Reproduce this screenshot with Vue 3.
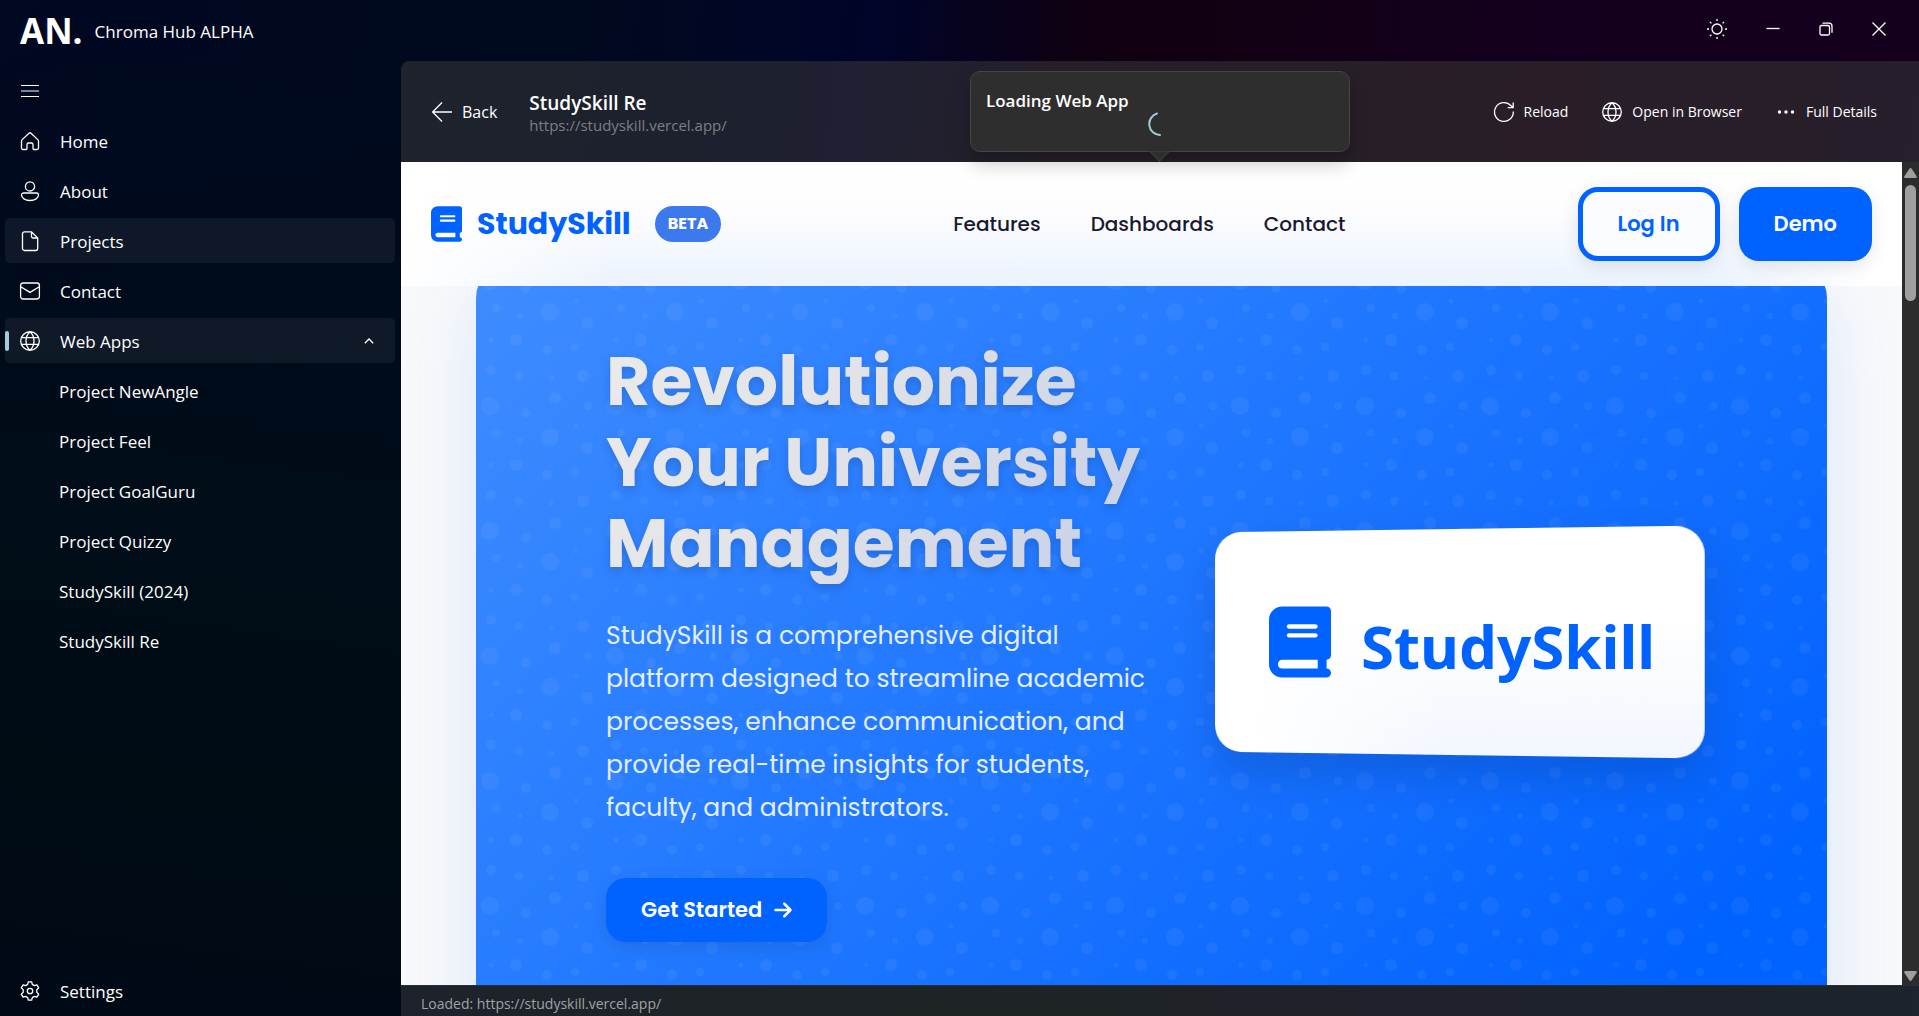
<script setup>
const bookPath =
  'M96 0C43 0 0 43 0 96V416c0 53 43 96 96 96H384h32c17.7 0 32-14.3 32-32s-14.3-32-32-32V384c17.7 0 32-14.3 32-32V32c0-17.7-14.3-32-32-32H384 96zm0 384H352v64H96c-17.7 0-32-14.3-32-32s14.3-32 32-32zm32-240c0-8.8 7.2-16 16-16H336c8.8 0 16 7.2 16 16s-7.2 16-16 16H144c-8.8 0-16-7.2-16-16zm16 48H336c8.8 0 16 7.2 16 16s-7.2 16-16 16H144c-8.8 0-16-7.2-16-16s7.2-16 16-16z'

const globePath =
  'M10 .7a9.300 9.300 0 1 0 0 18.600a9.300 9.300 0 1 0 0-18.600zM10 .7c-2.600 2.300-4 5.500-4 9.300s1.400 7 4 9.300M10 .7c2.600 2.300 4 5.500 4 9.300s-1.400 7-4 9.300M1.500 6.700h17M1.500 13.300h17'

const navItems = [
  { label: 'Home', icon: 'M2.200 8.600 9 2.200a1.500 1.500 0 0 1 2 0l6.800 6.400q.7.700.7 1.600V17a1.500 1.500 0 0 1-1.500 1.500h-3A1 1 0 0 1 13 17.500v-4a1.500 1.500 0 0 0-1.500-1.500h-3A1.500 1.500 0 0 0 7 13.500v4a1 1 0 0 1-1 1H3A1.500 1.500 0 0 1 1.500 17v-6.800q0-.9.7-1.600z' },
  { label: 'About', icon: 'M10 .8a4.600 4.600 0 1 0 0 9.200a4.600 4.600 0 1 0 0-9.200zM3.500 12h13a2 2 0 0 1 2 2c0 3-3.500 5.500-8.500 5.500S1.500 17 1.500 14a2 2 0 0 1 2-2z' },
  { label: 'Projects', icon: 'M4.500.8H11.500L17.700 7v10.500a2 2 0 0 1-2 2H4.500a2 2 0 0 1-2-2V2.800a2 2 0 0 1 2-2zM11.500.8V5.500A1.500 1.500 0 0 0 13 7h4.700', state: 'hover' },
  { label: 'Contact', icon: 'M3 2h14a2.400 2.400 0 0 1 2.400 2.400v11.200A2.400 2.400 0 0 1 17 18H3A2.400 2.400 0 0 1 .6 15.600V4.400A2.400 2.400 0 0 1 3 2zM.7 5.800 10 11.400l9.300-5.600' },
  { label: 'Web Apps', icon: globePath, state: 'active', open: true },
]

const webApps = [
  'Project NewAngle',
  'Project Feel',
  'Project GoalGuru',
  'Project Quizzy',
  'StudySkill (2024)',
  'StudySkill Re',
]

const siteLinks = ['Features', 'Dashboards', 'Contact']

/* x, y, radius of every bubble inside one 125px tile */
const bubbles = [
  [111, 37, 6], [20, 22, 4], [44, 30, 3], [74, 26, 9], [15, 54, 2.5],
  [40, 54, 6], [71, 64, 5], [99, 61, 4], [107, 90, 6], [15, 84, 5],
  [43, 90, 4], [75, 92, 2.5], [112, 120, 4], [14, 120, 9], [14, -5, 9],
  [112, -5, 4], [50, 127, 5], [50, 2, 5], [79, 112, 6], [100, 15, 2.5],
]
</script>

<template>
  <div class="app">
    <header class="titlebar">
      <span class="logo">AN.</span>
      <span class="app-name">Chroma Hub ALPHA</span>
      <div class="window-controls">
        <button type="button" aria-label="Theme">
          <svg width="20" height="20" viewBox="0 0 20 20" class="line">
            <circle cx="10" cy="10" r="5" />
            <path d="M10 0v2M10 18v2M0 10h2M18 10h2M2.900 2.900l1.500 1.500M15.600 15.600l1.500 1.500M2.900 17.100l1.500-1.500M15.600 4.400l1.500-1.500" />
          </svg>
        </button>
        <button type="button" aria-label="Minimize">
          <svg width="14" height="14" viewBox="0 0 14 14" class="line"><path d="M.5 6.500h13" /></svg>
        </button>
        <button type="button" aria-label="Restore">
          <svg width="14" height="14" viewBox="0 0 14 14" class="line">
            <rect x="1" y="3.500" width="9.500" height="9.500" rx="1.500" />
            <path d="M3.500 1.200h6.500a3 3 0 0 1 3 3v6.500" />
          </svg>
        </button>
        <button type="button" aria-label="Close">
          <svg width="14" height="14" viewBox="0 0 14 14" class="line"><path d="M.5.5l13 13M13.500.5l-13 13" /></svg>
        </button>
      </div>
    </header>

    <div class="body">
      <nav class="sidebar">
        <button type="button" class="nav-item" aria-label="Toggle navigation">
          <svg width="20" height="20" viewBox="0 0 20 20" class="line thin"><path d="M1 4.500h18M1 10h18M1 15.500h18" /></svg>
        </button>
        <button v-for="item in navItems" :key="item.label" type="button" class="nav-item" :class="item.state">
          <svg width="20" height="20" viewBox="0 0 20 20" class="line"><path :d="item.icon" /></svg>
          <span>{{ item.label }}</span>
          <svg v-if="item.open" class="line chevron" width="10" height="6" viewBox="0 0 10 6"><path d="M.8 5.200 5 1l4.200 4.200" /></svg>
        </button>
        <button v-for="name in webApps" :key="name" type="button" class="nav-item sub">
          <span>{{ name }}</span>
        </button>
        <button type="button" class="nav-item settings">
          <svg width="20" height="20" viewBox="0 0 20 20" class="line">
            <circle cx="10" cy="10" r="2.700" />
            <path d="M8.300.8h3.400l.6 2.600 2.100 1.200 2.500-.8 1.800 3.100-1.900 1.900v2.400l1.900 1.900-1.800 3.100-2.500-.8-2.100 1.200-.6 2.600H8.300l-.6-2.600-2.100-1.200-2.500.8-1.800-3.100 1.900-1.900V8.800L1.300 6.900l1.800-3.100 2.500.8 2.100-1.200z" stroke-linejoin="round" />
          </svg>
          <span>Settings</span>
        </button>
      </nav>

      <main class="content">
        <div class="toolbar">
          <button type="button" class="back">
            <svg width="20" height="20" viewBox="0 0 20 20" class="line"><path d="M20 10H.8M10 .5.6 10l9.400 9.500" /></svg>
            <span>Back</span>
          </button>
          <div class="page-title">
            <h2>StudySkill Re</h2>
            <p>https://studyskill.vercel.app/</p>
          </div>
          <div class="actions">
            <button type="button">
              <svg width="20" height="20" viewBox="0 0 20 20" class="line"><path d="M19.300 9.500A9.400 9.400 0 1 1 16.800 3.600L19 5.500M19.200.5v5.200h-5.500" /></svg>
              <span>Reload</span>
            </button>
            <button type="button">
              <svg width="20" height="20" viewBox="0 0 20 20" class="line"><path :d="globePath" /></svg>
              <span>Open in Browser</span>
            </button>
            <button type="button">
              <svg width="20" height="20" viewBox="0 0 20 20" fill="currentColor">
                <circle cx="3.500" cy="10" r="1.700" /><circle cx="10" cy="10" r="1.700" /><circle cx="16.500" cy="10" r="1.700" />
              </svg>
              <span>Full Details</span>
            </button>
          </div>
          <div class="tip" role="status">
            <strong>Loading Web App</strong>
            <svg class="spinner" width="24" height="24" viewBox="0 0 24 24"><path d="M9 1.500A11 11 0 0 0 12 23" /></svg>
          </div>
        </div>

        <div class="webview">
          <div class="site">
            <header class="site-header">
              <div class="brand">
                <svg class="book" viewBox="0 0 448 512"><path :d="bookPath" /></svg>
                <span class="brand-name">StudySkill</span>
                <span class="badge">BETA</span>
              </div>
              <nav class="site-nav">
                <a v-for="link in siteLinks" :key="link" href="#">{{ link }}</a>
              </nav>
              <div class="auth">
                <button type="button" class="btn outline">Log In</button>
                <button type="button" class="btn">Demo</button>
              </div>
            </header>

            <section class="hero">
              <svg class="bubbles" aria-hidden="true">
                <defs>
                  <pattern id="bubble-tile" width="125" height="125" y="24" patternUnits="userSpaceOnUse">
                    <circle v-for="(b, i) in bubbles" :key="i" :cx="b[0]" :cy="b[1]" :r="b[2]" fill="#fff" fill-opacity="0.05" />
                  </pattern>
                </defs>
                <rect width="100%" height="100%" fill="url(#bubble-tile)" />
              </svg>
              <div class="copy">
                <h1>Revolutionize<br />Your University<br />Management</h1>
                <p>
                  StudySkill is a comprehensive digital<br />platform designed to streamline academic<br />processes,
                  enhance communication, and<br />provide real-time insights for students,<br />faculty, and
                  administrators.
                </p>
                <button type="button" class="btn start">
                  Get Started
                  <svg width="18" height="20" viewBox="0 0 448 512" fill="currentColor">
                    <path d="M438.600 278.600c12.500-12.500 12.500-32.800 0-45.300l-160-160c-12.500-12.500-32.800-12.500-45.300 0s-12.500 32.800 0 45.300L338.800 224 32 224c-17.700 0-32 14.300-32 32s14.300 32 32 32l306.700 0L233.400 393.400c-12.500 12.500-12.500 32.800 0 45.300s32.800 12.500 45.300 0l160-160z" />
                  </svg>
                </button>
              </div>
              <div class="card">
                <svg class="book" viewBox="0 0 448 512"><path :d="bookPath" /></svg>
                <span>StudySkill</span>
              </div>
            </section>
          </div>

          <div class="scrollbar" aria-hidden="true">
            <svg width="13" height="10" viewBox="0 0 13 10"><path d="M6.500 0Q7.200 0 7.700.7L12.800 8.500Q13 10 11.800 10H1.200Q0 10 .2 8.500L5.300.7Q5.800 0 6.500 0z" /></svg>
            <div class="track"><div class="thumb"></div></div>
            <svg width="13" height="10" viewBox="0 0 13 10"><path d="M6.500 10Q7.200 10 7.700 9.300L12.800 1.500Q13 0 11.800 0H1.200Q0 0 .2 1.500L5.300 9.300Q5.800 10 6.500 10z" /></svg>
          </div>
        </div>

        <footer class="status">Loaded: https://studyskill.vercel.app/</footer>
      </main>
    </div>
  </div>
</template>

<style>
body {
  margin: 0;
}
</style>

<style scoped>
.app {
  display: flex;
  flex-direction: column;
  height: 100vh;
  overflow: hidden;
  color: #fff;
  font: 17px/24px 'Segoe UI', 'Open Sans', 'Noto Sans', sans-serif;
  background: linear-gradient(94deg, #000822 0%, #000a1e 28%, #000529 44%, #11000f 56%, #14001e 78%, #14001b 100%);
}

button {
  padding: 0;
  border: 0;
  background: none;
  color: inherit;
  font: inherit;
}

h1,
h2,
p {
  margin: 0;
}

svg {
  flex: none;
}

.line {
  fill: none;
  stroke: currentColor;
  stroke-width: 1.3;
  overflow: visible;
}

.line.thin {
  stroke-width: 1;
}

.titlebar {
  display: flex;
  flex: none;
  align-items: center;
  height: 61px;
  padding: 0 33px 0 20px;
}

.logo {
  font-size: 35px;
  font-weight: 700;
  line-height: 64px;
}

.app-name {
  margin-left: 12px;
  padding-top: 2px;
}

.window-controls {
  display: flex;
  align-items: center;
  gap: 39px;
  height: 57px;
  margin-left: auto;
  align-self: flex-start;
}

.window-controls button {
  display: flex;
}

.body {
  display: flex;
  flex: 1;
  min-height: 0;
}

.sidebar {
  display: flex;
  flex: none;
  flex-direction: column;
  gap: 5px;
  box-sizing: border-box;
  width: 401px;
  padding: 7px 6px 3px 5px;
  background: linear-gradient(188deg, #00082200 0%, #000c18 42%, #000c14 75%, #000a17 100%);
}

.nav-item {
  position: relative;
  display: flex;
  align-items: center;
  gap: 20px;
  height: 45px;
  padding: 0 15px;
  border-radius: 5px;
  text-align: left;
}

.nav-item span {
  padding-top: 2px;
}

.nav-item.hover,
.nav-item.active {
  background: rgba(255, 255, 255, 0.06);
}

.nav-item.active::before {
  content: '';
  position: absolute;
  left: 0;
  width: 4px;
  height: 20px;
  border-radius: 2px;
  background: #a3cbd8;
}

.nav-item.sub {
  padding-left: 54px;
}

.nav-item.settings {
  margin-top: auto;
}

.chevron {
  margin-left: auto;
  margin-right: 6px;
}

.content {
  display: flex;
  flex: 1;
  flex-direction: column;
  min-width: 0;
  overflow: hidden;
  border-top-left-radius: 8px;
}

.toolbar {
  position: relative;
  z-index: 3;
  display: flex;
  flex: none;
  align-items: center;
  box-sizing: border-box;
  height: 101px;
  padding: 0 42px 0 31px;
  border-top-left-radius: 8px;
  background: linear-gradient(97deg, #1e232c 0%, #1d212e 20%, #1f2032 30%, #262029 43%, #291e28 75%, #271f2c 100%);
}

.back {
  display: flex;
  align-items: center;
  gap: 10px;
  font-size: 16px;
}

.page-title {
  margin-left: 32px;
  padding-top: 2px;
}

.page-title h2 {
  font-size: 19px;
  font-weight: 600;
  line-height: 24px;
}

.page-title p {
  color: #7d7e83;
  font-size: 15px;
  line-height: 20px;
}

.actions {
  display: flex;
  gap: 34px;
  margin-left: auto;
  font-size: 14px;
}

.actions button {
  display: flex;
  align-items: center;
  gap: 10px;
}

.tip {
  position: absolute;
  top: 10px;
  left: 50%;
  display: flex;
  flex-direction: column;
  box-sizing: border-box;
  width: 380px;
  height: 81px;
  padding: 17px 15px 0;
  border: 1px solid #454446;
  border-radius: 10px;
  background: #2e2e2e;
  box-shadow: 0 10px 20px rgba(0, 0, 0, 0.25);
  transform: translateX(-50%);
}

.tip::after {
  content: '';
  position: absolute;
  bottom: -8px;
  left: 50%;
  width: 14px;
  height: 14px;
  margin-left: -8px;
  border: solid #454446;
  border-width: 0 1px 1px 0;
  background: #2e2e2e;
  transform: rotate(45deg);
  clip-path: polygon(100% 0, 100% 100%, 0 100%);
}

.tip strong {
  font-weight: 600;
  line-height: 23px;
}

.spinner {
  align-self: center;
  fill: none;
  stroke: #a3cbd8;
  stroke-width: 2;
  stroke-linecap: round;
}

.webview {
  display: flex;
  flex: 1;
  min-height: 0;
  background: #f8f9fa;
}

.site {
  flex: 1;
  min-width: 0;
  overflow: hidden;
  font-family: Poppins, Inter, sans-serif;
}

.site-header {
  position: relative;
  z-index: 2;
  display: flex;
  align-items: center;
  justify-content: space-between;
  height: 124px;
  padding: 0 30px;
  background:
    linear-gradient(90deg, #fff 0%, #fff0 14%, #fff0 88%, #fff 98%),
    linear-gradient(180deg, #fff 0%, #fdfdff 40%, #f3f7fe 75%, #eaf3ff 100%);
}

.brand {
  display: flex;
  align-items: center;
}

.book {
  fill: #0062ff;
}

.brand .book {
  width: 31px;
  height: 36px;
}

.brand-name {
  margin-left: 15px;
  color: #0062ff;
  font-size: 30px;
  font-weight: 700;
}

.badge {
  margin-left: 24px;
  padding: 0 13px;
  border-radius: 18px;
  background: #3b79ec;
  font-size: 16px;
  font-weight: 700;
  line-height: 36px;
}

.site-nav {
  display: flex;
  gap: 50px;
}

.site-nav a {
  color: #1a1a2e;
  font-size: 20px;
  font-weight: 500;
  text-decoration: none;
}

.auth {
  display: flex;
  gap: 19px;
}

.btn {
  box-sizing: border-box;
  height: 74px;
  padding: 0 35px;
  border-radius: 20px;
  background: #0062ff;
  box-shadow: 0 5px 18px rgba(0, 0, 0, 0.1);
  color: #fff;
  font-size: 21px;
  font-weight: 600;
}

.btn.outline {
  border: 5px solid #0062ff;
  background: #fafcff;
  color: #0062ff;
}

.hero {
  position: relative;
  display: flex;
  align-items: center;
  justify-content: space-between;
  margin: -24px 5% 0;
  padding: 79px 128px 120px 130px;
  border-radius: 36px;
  background: linear-gradient(135deg, #3f8cff 0%, #0062ff 90%);
  box-shadow: 0 25px 80px rgba(0, 98, 255, 0.12);
}

.bubbles {
  position: absolute;
  inset: 0;
  width: 100%;
  height: 100%;
  border-radius: 36px;
}

.copy,
.card {
  position: relative;
}

.copy h1 {
  font-size: 68px;
  font-weight: 700;
  line-height: 81px;
  color: transparent;
  background: linear-gradient(120deg, #eaeaea 0%, #e2e3e8 40%, #c6cfe8 100%);
  background-clip: text;
  filter: drop-shadow(0 4px 4px rgba(0, 0, 0, 0.14));
}

.copy p {
  margin: 30px 0 49px;
  color: #e3eeff;
  font-size: 25px;
  line-height: 43px;
  white-space: nowrap;
}

.start {
  display: flex;
  align-items: center;
  gap: 12px;
  height: 64px;
}

.card {
  display: flex;
  align-items: center;
  box-sizing: border-box;
  width: 493px;
  height: 226px;
  padding: 0 50px 0 63px;
}

.card::before {
  content: '';
  position: absolute;
  inset: 0;
  border-radius: 28px;
  background:
    linear-gradient(90deg, #fff 8%, #fff0 50%),
    linear-gradient(180deg, #fff 40%, #f2f6fe 100%);
  box-shadow: 0 20px 45px rgba(0, 30, 90, 0.2);
  transform: perspective(1000px) rotateY(-7deg);
}

.card .book {
  position: relative;
  width: 62px;
  height: 72px;
}

.card span {
  position: relative;
  margin-left: 30px;
  padding-top: 8px;
  color: #0062ff;
  font: 700 60px/72px 'Segoe UI', 'Noto Sans', 'Open Sans', sans-serif;
}

.scrollbar {
  display: flex;
  flex: none;
  flex-direction: column;
  align-items: center;
  box-sizing: border-box;
  width: 17px;
  padding: 6px 0 4px;
  background: #2c2c2c;
  fill: #9f9f9f;
}

.track {
  flex: 1;
  width: 11px;
  padding-top: 7px;
}

.thumb {
  height: 116px;
  border-radius: 6px;
  background: #9f9f9f;
}

.status {
  flex: none;
  box-sizing: border-box;
  height: 31px;
  padding: 7px 20px 0;
  overflow: hidden;
  border-top: 1px solid #2a2e36;
  background: linear-gradient(90deg, #1e222b 0%, #1e2425 40%, #20222b 65%, #1d242b 100%);
  color: #a0a2a4;
  font-size: 14px;
  line-height: 22px;
}
</style>
